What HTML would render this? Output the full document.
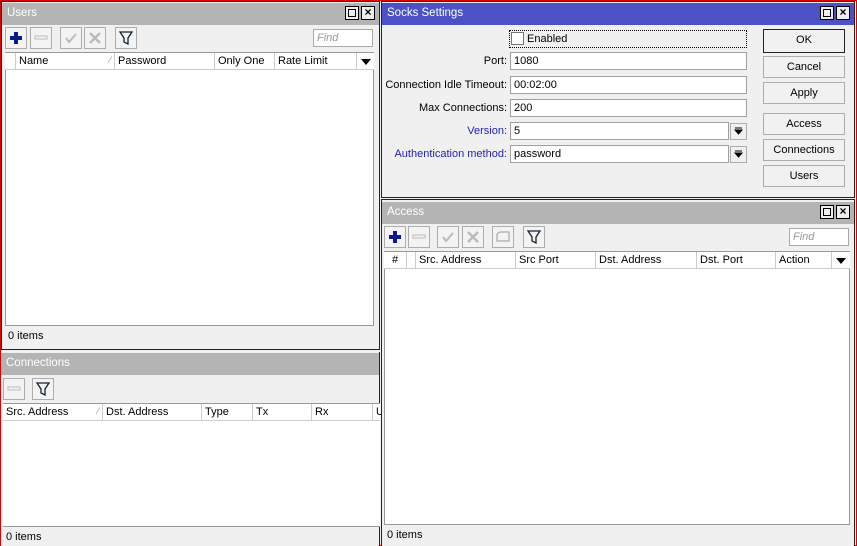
<!DOCTYPE html>
<html><head><meta charset="utf-8"><style>
*{box-sizing:border-box;margin:0;padding:0}
body{width:857px;height:546px;overflow:hidden;background:#f0f0f0;font-family:"Liberation Sans",sans-serif;font-size:11px;color:#000;position:relative}
.a{position:absolute}
.win{position:absolute;background:#f0f0f0;border:1px solid #333}
.tb{position:absolute;left:0;right:0;height:22px;background:#b4b4b4;color:#fff;padding:4px 0 0 5px;font-size:11.5px}
.tb.act{background:#4c52c6;color:#fff}
.btn{position:absolute;width:22px;height:22px;border:1px solid #adadad;background:#f3f3f3}
.btn svg{position:absolute;left:2px;top:2px}
.find{position:absolute;width:60px;height:18px;background:#fff;border:1px solid #aaa;color:#999;font-style:italic;padding:2px 3px}
.hdr{position:absolute;height:18px;background:#fff;border-top:1px solid #999;border-bottom:1px solid #ccc}
.hc{position:absolute;top:0;height:17px;border-right:1px solid #ccc;padding:2px 3px}
.list{position:absolute;background:#fff}
.st{position:absolute;padding:3px 3px}
.wbx{position:absolute;width:14px;height:14px;border:1px solid #000;background:#eee}
.wbx i{position:absolute;left:2px;top:2px;width:8px;height:8px;border:1px solid #000}
.wx{position:absolute;width:14px;height:14px;border:1px solid #000;background:#eee;font-size:12px;line-height:11px;text-align:center;font-weight:bold}
.lbl{position:absolute;text-align:right;width:200px}
.inp{position:absolute;height:18px;background:#fff;border:1px solid #a0a0a0;padding:2px 3px}
.pb{position:absolute;left:763px;width:82px;height:22px;border:1px solid #adadad;background:#f1f1f1;text-align:center;padding-top:4px}
.dd{position:absolute;width:17px;height:17px;border:1px solid #adadad;background:#f1f1f1}
.tri{position:absolute;width:0;height:0;border-left:5px solid transparent;border-right:5px solid transparent;border-top:6px solid #000}
</style></head><body>
<div class="a" style="left:0;top:0;width:857px;height:546px;border:1px solid #d00"></div>

<!-- USERS -->
<div class="win" style="left:1px;top:1px;width:379px;height:349px;border-color:#222">
<div class="tb" style="top:1px">Users</div>
<div class="wbx" style="left:343px;top:4px"><i></i></div><div class="wx" style="left:359px;top:4px">×</div>
</div>
<div class="btn" style="left:5px;top:27px"><svg width="16" height="16"><path d="M6 2h4v4h4v4h-4v4h-4v-4h-4v-4h4z" fill="#0a1a8c"/></svg></div>
<div class="btn" style="left:30px;top:27px"><svg width="16" height="16"><rect x="2" y="6" width="12" height="3" fill="none" stroke="#bbb"/></svg></div>
<div class="btn" style="left:60px;top:27px"><svg width="16" height="16"><path d="M3 8l3 4 7-8" fill="none" stroke="#bbb" stroke-width="2"/></svg></div>
<div class="btn" style="left:84px;top:27px"><svg width="16" height="16"><path d="M3 3l10 10M13 3L3 13" stroke="#bbb" stroke-width="2.5"/></svg></div>
<div class="btn" style="left:115px;top:27px"><svg width="16" height="16"><path d="M2 2h12l-4 6v6l-4-2v-4z" fill="none" stroke="#123" stroke-width="1.3"/></svg></div>
<div class="find" style="left:313px;top:29px">Find</div>
<div class="hdr" style="left:5px;top:52px;width:369px">
<div class="hc" style="left:0;width:11px"></div>
<div class="hc" style="left:11px;width:99px">Name<span style="float:right;color:#999;font-size:9px">⁄</span></div>
<div class="hc" style="left:110px;width:100px">Password</div>
<div class="hc" style="left:210px;width:60px">Only One</div>
<div class="hc" style="left:270px;width:82px">Rate Limit</div>
<div class="tri" style="left:356px;top:6px"></div>
</div>
<div class="list" style="left:5px;top:70px;width:369px;height:256px;border:1px solid #999;border-top:0"></div>
<div class="st" style="left:5px;top:327px">0 items</div>

<!-- CONNECTIONS -->
<div class="win" style="left:1px;top:352px;width:379px;height:194px;border:0;border-right:1px solid #222">
<div class="tb" style="top:1px">Connections</div>
</div>
<div class="btn" style="left:3px;top:378px"><svg width="16" height="16"><rect x="2" y="6" width="12" height="3" fill="none" stroke="#bbb"/></svg></div>
<div class="btn" style="left:32px;top:378px"><svg width="16" height="16"><path d="M2 2h12l-4 6v6l-4-2v-4z" fill="none" stroke="#123" stroke-width="1.3"/></svg></div>
<div class="hdr" style="left:3px;top:403px;width:377px">
<div class="hc" style="left:0;width:100px">Src. Address<span style="float:right;color:#999;font-size:9px">⁄</span></div>
<div class="hc" style="left:100px;width:99px">Dst. Address</div>
<div class="hc" style="left:199px;width:51px">Type</div>
<div class="hc" style="left:250px;width:59px">Tx</div>
<div class="hc" style="left:309px;width:61px">Rx</div>
<div class="hc" style="left:370px;width:10px;border:0">U</div>
</div>
<div class="list" style="left:3px;top:421px;width:377px;height:106px;border-bottom:1px solid #999"></div>
<div class="st" style="left:3px;top:528px">0 items</div>

<!-- SOCKS -->
<div class="win" style="left:381px;top:1px;width:474px;height:197px;border-color:#222">
<div class="tb act" style="top:1px">Socks Settings</div>
<div class="wbx" style="left:438px;top:4px"><i></i></div><div class="wx" style="left:454px;top:4px">×</div>
</div>
<div class="a" style="left:509px;top:30px;width:238px;height:18px;border:1px dotted #000"></div>
<div class="a" style="left:511px;top:32px;width:13px;height:13px;background:#fff;border:1px solid #777"></div>
<div class="a" style="left:527px;top:33px">Enabled</div>
<div class="lbl" style="left:307px;top:55px">Port:</div><div class="inp" style="left:510px;top:52px;width:237px">1080</div>
<div class="lbl" style="left:307px;top:79px">Connection Idle Timeout:</div><div class="inp" style="left:510px;top:76px;width:237px">00:02:00</div>
<div class="lbl" style="left:307px;top:102px">Max Connections:</div><div class="inp" style="left:510px;top:99px;width:237px">200</div>
<div class="lbl" style="left:307px;top:125px;color:#2222bb">Version:</div><div class="inp" style="left:510px;top:122px;width:219px">5</div>
<div class="dd" style="left:730px;top:123px"><svg width="15" height="15"><path d="M4 4h7M4 6h7l-3.5 4z" stroke="#000" fill="#000"/></svg></div>
<div class="lbl" style="left:307px;top:148px;color:#2222bb">Authentication method:</div><div class="inp" style="left:510px;top:145px;width:219px">password</div>
<div class="dd" style="left:730px;top:146px"><svg width="15" height="15"><path d="M4 4h7M4 6h7l-3.5 4z" stroke="#000" fill="#000"/></svg></div>
<div class="pb" style="top:29px;height:24px;border:1px solid #222">OK</div>
<div class="pb" style="top:56px">Cancel</div>
<div class="pb" style="top:82px">Apply</div>
<div class="pb" style="top:113px">Access</div>
<div class="pb" style="top:139px">Connections</div>
<div class="pb" style="top:165px">Users</div>

<!-- ACCESS -->
<div class="win" style="left:381px;top:199px;width:474px;height:347px;border-color:#222;border-bottom:0">
<div class="tb" style="top:2px">Access</div>
<div class="wbx" style="left:438px;top:5px"><i></i></div><div class="wx" style="left:454px;top:5px">×</div>
</div>
<div class="btn" style="left:384px;top:226px"><svg width="16" height="16"><path d="M6 2h4v4h4v4h-4v4h-4v-4h-4v-4h4z" fill="#0a1a8c"/></svg></div>
<div class="btn" style="left:408px;top:226px"><svg width="16" height="16"><rect x="2" y="6" width="12" height="3" fill="none" stroke="#bbb"/></svg></div>
<div class="btn" style="left:437px;top:226px"><svg width="16" height="16"><path d="M3 8l3 4 7-8" fill="none" stroke="#bbb" stroke-width="2"/></svg></div>
<div class="btn" style="left:462px;top:226px"><svg width="16" height="16"><path d="M3 3l10 10M13 3L3 13" stroke="#bbb" stroke-width="2.5"/></svg></div>
<div class="btn" style="left:492px;top:226px"><svg width="16" height="16"><path d="M2 5l3-2h9v9H2z" fill="none" stroke="#999"/></svg></div>
<div class="btn" style="left:523px;top:226px"><svg width="16" height="16"><path d="M2 2h12l-4 6v6l-4-2v-4z" fill="none" stroke="#123" stroke-width="1.3"/></svg></div>
<div class="find" style="left:789px;top:228px">Find</div>
<div class="hdr" style="left:384px;top:251px;width:466px">
<div class="hc" style="left:0;width:23px;text-align:center">#</div>
<div class="hc" style="left:23px;width:9px"></div>
<div class="hc" style="left:32px;width:100px">Src. Address</div>
<div class="hc" style="left:132px;width:80px">Src Port</div>
<div class="hc" style="left:212px;width:101px">Dst. Address</div>
<div class="hc" style="left:313px;width:79px">Dst. Port</div>
<div class="hc" style="left:392px;width:56px">Action</div>
<div class="tri" style="left:452px;top:6px"></div>
</div>
<div class="list" style="left:384px;top:269px;width:466px;height:256px;border:1px solid #999;border-top:0"></div>
<div class="st" style="left:384px;top:526px">0 items</div>
</body></html>
